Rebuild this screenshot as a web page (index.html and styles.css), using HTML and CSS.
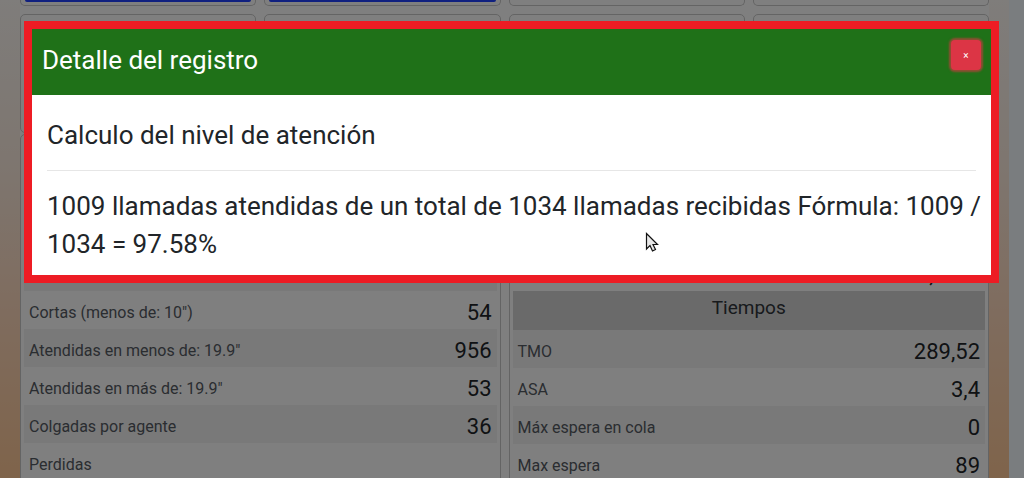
FILE: index.html
```html
<!DOCTYPE html>
<html lang="es">
<head>
<meta charset="utf-8">
<meta name="viewport" content="width=device-width, initial-scale=1">
<title>Detalle del registro</title>
<link rel="stylesheet" href="styles.css">
</head>
<body>
<div class="app">
  <main class="panel">
    <div class="cards cards-top">
      <div class="card"><div class="fill blue"></div></div>
      <div class="card"><div class="fill blue"></div></div>
      <div class="card"></div>
      <div class="card"></div>
    </div>
    <div class="cards cards-mid">
      <div class="card"></div>
      <div class="card"></div>
      <div class="card"></div>
      <div class="card"></div>
    </div>
    <div class="tables">
      <section class="card data-card">
        <table class="data">
          <tbody>
            <tr class="spacer"><td colspan="2"></td></tr>
            <tr><th scope="row">Cortas (menos de: 10")</th><td>54</td></tr>
            <tr class="odd"><th scope="row">Atendidas en menos de: 19.9"</th><td>956</td></tr>
            <tr><th scope="row">Atendidas en más de: 19.9"</th><td>53</td></tr>
            <tr class="odd"><th scope="row">Colgadas por agente</th><td>36</td></tr>
            <tr><th scope="row">Perdidas</th><td></td></tr>
          </tbody>
        </table>
      </section>
      <section class="card data-card">
        <table class="data">
          <tbody>
            <tr class="lead"><th scope="row"></th><td>97,58 %</td></tr>
            <tr class="group"><th colspan="2" scope="colgroup">Tiempos</th></tr>
            <tr class="odd"><th scope="row">TMO</th><td>289,52</td></tr>
            <tr><th scope="row">ASA</th><td>3,4</td></tr>
            <tr class="odd"><th scope="row">Máx espera en cola</th><td>0</td></tr>
            <tr><th scope="row">Max espera</th><td>89</td></tr>
          </tbody>
        </table>
      </section>
    </div>
  </main>
  <div class="rail"></div>
</div>
<div class="backdrop">
  <div class="modal" role="dialog" aria-modal="true" aria-labelledby="modal-title">
    <header class="modal-header">
      <h1 id="modal-title">Detalle del registro</h1>
      <button class="close" type="button" aria-label="Cerrar">×</button>
    </header>
    <div class="modal-body">
      <h2>Calculo del nivel de atención</h2>
      <hr>
      <p>1009 llamadas atendidas de un total de 1034 llamadas recibidas Fórmula: 1009 / 1034 = 97.58%</p>
    </div>
  </div>
</div>
<svg class="cursor" width="14" height="20" viewBox="0 0 14 20" aria-hidden="true"><path d="M1.5 1.5V17L5 13.5L7.5 19L10.500 17.500L8 12.500H12.500Z" fill="#e8e8e8" stroke="#111" stroke-width="1.200"/></svg>
</body>
</html>
```
FILE: styles.css
```css
* { box-sizing: border-box; }

body {
  margin: 0;
  overflow: hidden;
  font-family: Roboto, "Liberation Sans", sans-serif;
  color: #212529;
}

.app {
  display: flex;
  height: 100vh;
  overflow: hidden;
  background: linear-gradient(#fefaf6 0%, #fcecdf 35%, #ffd9bd 65%, #ffc896 100%);
}

.panel {
  flex: 1;
  margin: 0 20px;
  background: #fff;
}

.rail {
  width: 15px;
  background: #f4faff;
}

.cards,
.tables {
  display: grid;
  gap: 8px;
}

.cards { grid-template-columns: repeat(4, 1fr); }
.tables { grid-template-columns: repeat(2, 1fr); }

.card {
  border: 1px solid #c8c8c8;
  border-radius: 5px;
}

.cards-top .card {
  height: 6px;
  padding: 0 4px;
  border-top: 0;
  border-radius: 0 0 5px 5px;
}

.fill {
  height: 2px;
  border-radius: 0 0 4px 4px;
}

.blue { background: #2040ff; }

.cards-mid {
  margin-top: 8px;
}

.cards-mid .card { height: 119px; }

.data-card {
  margin-top: 1px;
  padding: 118px 3px 0;
}

.data {
  width: 100%;
  border-collapse: collapse;
}

.data tr { height: 38px; }
.data .odd,
.data .spacer { background: #f2f2f2; }
.data .group { height: 39px; background: #d4d4d4; }

.data th,
.data td {
  padding: 6px 5px 0;
  line-height: 24px;
}

.data th {
  font-size: 16px;
  font-weight: 400;
  text-align: left;
  color: #555a62;
}

.data td {
  font-size: 22px;
  text-align: right;
}

.data .group th {
  padding: 0 5px 6px;
  font-size: 19px;
  text-align: center;
  color: #30343a;
}

.backdrop {
  position: fixed;
  inset: 0;
  padding: 21px 25px 0 24px;
  background: rgba(0, 0, 0, 0.5);
}

.modal {
  border: 8px solid #ed1c24;
  background: #fff;
}

.modal-header {
  display: flex;
  justify-content: space-between;
  align-items: flex-start;
  padding: 11px 10px 15px;
  background: #1f7118;
}

.modal h1,
.modal h2,
.modal p {
  margin: 0;
  font-size: 26px;
  font-weight: 400;
  line-height: 38px;
}

.modal h1 {
  line-height: 40px;
  color: #fff;
}

.close {
  width: 30px;
  height: 30px;
  padding: 0;
  border: 0;
  border-radius: 4px;
  background: #dc3545;
  box-shadow: 0 0 2px 2px rgba(220, 53, 69, 0.6);
  color: #fff;
  font-family: inherit;
  font-size: 10px;
}

.modal-body { padding: 21px 9px 12px 15px; }

.modal hr {
  margin: 16px 6px 16px 0;
  border: 0;
  border-top: 1px solid #e6e6e6;
}

.cursor {
  position: absolute;
  left: 645px;
  top: 232px;
}
```
